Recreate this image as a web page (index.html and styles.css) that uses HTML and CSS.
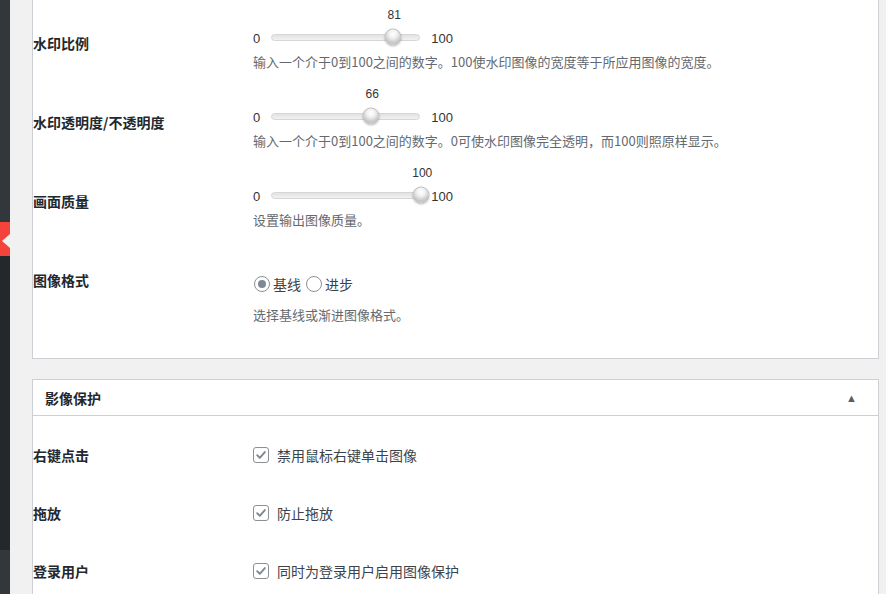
FILE: index.html
```html
<!DOCTYPE html>
<html lang="zh">
<head>
  <meta charset="UTF-8" />
  <title>图像水印设置</title>
  <link rel="stylesheet" href="styles.css">
</head>
<body>
  <div class="admin-menu">
    <div class="menu-top"></div>
    <div class="menu-current"></div>
    <div class="menu-sub"></div>
    <div class="menu-bottom"></div>
  </div>

  <div class="wrap">
    <!-- 水印设置 -->
    <div class="postbox first-box">
      <div class="form-row">
        <div class="row-label">水印比例</div>
        <div class="row-field slider-field">
          <div class="slider">
            <span class="range-num">0</span>
            <div class="track">
              <span class="thumb-value" style="left: 81%">81</span>
              <span class="thumb" style="left: 81%"></span>
            </div>
            <span class="range-num">100</span>
          </div>
          <p class="description">输入一个介于0到100之间的数字。100使水印图像的宽度等于所应用图像的宽度。</p>
        </div>
      </div>

      <div class="form-row">
        <div class="row-label">水印透明度/不透明度</div>
        <div class="row-field slider-field">
          <div class="slider">
            <span class="range-num">0</span>
            <div class="track">
              <span class="thumb-value" style="left: 66%">66</span>
              <span class="thumb" style="left: 66%"></span>
            </div>
            <span class="range-num">100</span>
          </div>
          <p class="description">输入一个介于0到100之间的数字。0可使水印图像完全透明，而100则照原样显示。</p>
        </div>
      </div>

      <div class="form-row">
        <div class="row-label">画面质量</div>
        <div class="row-field slider-field">
          <div class="slider">
            <span class="range-num">0</span>
            <div class="track">
              <span class="thumb-value" style="left: 100%">100</span>
              <span class="thumb" style="left: 100%"></span>
            </div>
            <span class="range-num">100</span>
          </div>
          <p class="description">设置输出图像质量。</p>
        </div>
      </div>

      <div class="form-row format-row">
        <div class="row-label">图像格式</div>
        <div class="row-field">
          <div class="radios">
            <span class="radio checked"></span><span class="opt">基线</span>
            <span class="radio"></span><span class="opt">进步</span>
          </div>
          <p class="description format-desc">选择基线或渐进图像格式。</p>
        </div>
      </div>
    </div>

    <!-- 影像保护 -->
    <div class="postbox">
      <div class="postbox-header">
        <h2>影像保护</h2>
        <span class="toggle">&#9650;</span>
      </div>
      <div class="inside">
        <div class="check-row">
          <div class="row-label">右键点击</div>
          <label class="check"><span class="box"><svg viewBox="0 0 16 16" width="16" height="16"><path d="M3.6 8.2 6.6 11.2 12.4 4.6" fill="none" stroke="#7e8993" stroke-width="2.2" stroke-linecap="round" stroke-linejoin="round"/></svg></span>禁用鼠标右键单击图像</label>
        </div>
        <div class="check-row">
          <div class="row-label">拖放</div>
          <label class="check"><span class="box"><svg viewBox="0 0 16 16" width="16" height="16"><path d="M3.6 8.2 6.6 11.2 12.4 4.6" fill="none" stroke="#7e8993" stroke-width="2.2" stroke-linecap="round" stroke-linejoin="round"/></svg></span>防止拖放</label>
        </div>
        <div class="check-row">
          <div class="row-label">登录用户</div>
          <label class="check"><span class="box"><svg viewBox="0 0 16 16" width="16" height="16"><path d="M3.6 8.2 6.6 11.2 12.4 4.6" fill="none" stroke="#7e8993" stroke-width="2.2" stroke-linecap="round" stroke-linejoin="round"/></svg></span>同时为登录用户启用图像保护</label>
        </div>
      </div>
    </div>
  </div>
</body>
</html>
```

FILE: styles.css
```css
* {
  margin: 0;
  padding: 0;
  box-sizing: border-box;
}

body {
  font-family: "Liberation Sans", "Noto Sans CJK SC", sans-serif;
  font-size: 13px;
  color: #23282d;
  background-color: #f1f1f1;
  display: flex;
  min-height: 100vh;
  overflow: hidden;
}

/* 左侧管理菜单 */
.admin-menu {
  width: 10px;
  flex-shrink: 0;
  display: flex;
  flex-direction: column;
}

.menu-top { height: 222px; background-color: #32373c; }
.menu-current { height: 34px; background-color: #f4433a; position: relative; }
.menu-sub { height: 294px; background-color: #23282d; }
.menu-bottom { flex: 1; background-color: #32373c; }

.menu-current::after {
  content: "";
  position: absolute;
  right: 0;
  top: 12px;
  border-top: 7px solid transparent;
  border-bottom: 7px solid transparent;
  border-right: 8px solid #f1f1f1;
}

.wrap {
  flex: 1;
  padding: 0 7px 0 22px;
}

.postbox {
  background-color: #fff;
  border: 1px solid #ccd0d4;
  margin-bottom: 20px;
}

.first-box {
  border-top: none;
  padding-top: 4px;
}

.row-label {
  width: 220px;
  flex-shrink: 0;
  font-family: "Noto Sans CJK SC", sans-serif;
  font-size: 14px;
  font-weight: bold;
  line-height: 20px;
  color: #23282d;
}

.form-row {
  display: flex;
  height: 79px;
}

.form-row .row-label {
  padding-top: 29px;
}

.slider-field {
  padding-top: 22px;
}

.slider {
  display: flex;
  align-items: center;
  gap: 11px;
  height: 22px;
  font-size: 13px;
  color: #333;
}

.range-num {
  position: relative;
  top: 1px;
}

.track {
  position: relative;
  width: 149px;
  height: 7px;
  border: 1px solid #d6d6d6;
  border-radius: 4px;
  background: linear-gradient(#e2e2e2, #f1f1f1);
}

.thumb {
  position: absolute;
  top: 50%;
  width: 17px;
  height: 17px;
  margin-left: 2px;
  transform: translate(-50%, -50%);
  border: 1px solid #c2c2c2;
  border-radius: 50%;
  background: radial-gradient(circle at 50% 30%, #fff 0%, #f2f2f2 30%, #c4c4c4 70%, #e0e0e0 100%);
  box-shadow: 0 1px 2px rgba(0,0,0,0.25);
}

.thumb-value {
  position: absolute;
  bottom: 18px;
  margin-left: 3px;
  transform: translateX(-50%);
  font-size: 12px;
  line-height: 14px;
  color: #333;
}

.description {
  margin-top: 4px;
  font-family: "Noto Sans CJK SC", sans-serif;
  font-size: 13px;
  line-height: 20px;
  color: #646970;
}

.format-row {
  height: 117px;
}

.radios {
  display: flex;
  align-items: center;
  margin-top: 32px;
  height: 22px;
  font-family: "Noto Sans CJK SC", sans-serif;
  font-size: 14px;
  color: #3c434a;
}

.radio {
  width: 16px;
  height: 16px;
  margin-left: 1px;
  margin-right: 3px;
  border: 1px solid #8c8f94;
  border-radius: 50%;
  display: flex;
  align-items: center;
  justify-content: center;
}

.radio.checked::before {
  content: "";
  width: 8px;
  height: 8px;
  border-radius: 50%;
  background-color: #7e8993;
}

.opt {
  margin-right: 4px;
}

.format-desc {
  margin-top: 10px;
}

/* 折叠面板 */
.postbox-header {
  display: flex;
  align-items: center;
  justify-content: space-between;
  height: 36px;
  padding: 0 21px 0 12px;
  border-bottom: 1px solid #ccd0d4;
}

.postbox-header h2 {
  font-family: "Noto Sans CJK SC", sans-serif;
  font-size: 14px;
  font-weight: bold;
  color: #23282d;
}

.toggle {
  font-size: 11px;
  color: #555d66;
}

.inside {
  padding-top: 10px;
}

.check-row {
  display: flex;
  align-items: center;
  height: 58px;
}

.check {
  display: flex;
  align-items: center;
  font-family: "Noto Sans CJK SC", sans-serif;
  font-size: 14px;
  color: #3c434a;
}

.box {
  width: 16px;
  height: 16px;
  margin-right: 8px;
  border: 1px solid #8c8f94;
  border-radius: 3px;
  display: flex;
  align-items: center;
  justify-content: center;
}
```
